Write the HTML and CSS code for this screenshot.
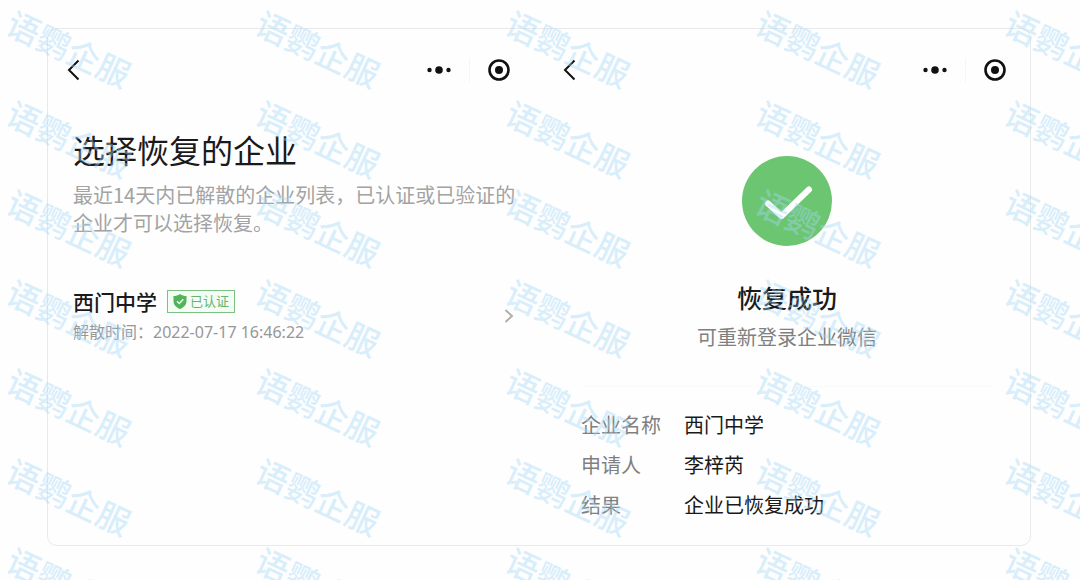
FILE: index.html
```html
<!DOCTYPE html>
<html lang="zh-CN">
<head>
  <meta charset="UTF-8" />
  <meta name="viewport" content="width=device-width, initial-scale=1.0" />
  <title>恢复企业</title>
  <link rel="stylesheet" href="styles.css">
</head>
<body>
  <main class="board">
    <!-- pick a company -->
    <section class="screen">
      <header class="navbar">
        <button class="icon-btn" type="button" aria-label="返回">
          <svg width="14" height="22" viewBox="0 0 14 22" fill="none" stroke="#111" stroke-width="2"><path d="M12.500 1.500 L3 11 L12.500 20.500"/></svg>
        </button>
        <div class="capsule">
          <button class="icon-btn" type="button" aria-label="更多">
            <svg width="24" height="10" viewBox="0 0 24 10" fill="#111"><circle cx="2.500" cy="5" r="2.200"/><circle cx="12" cy="5" r="3.800"/><circle cx="21.500" cy="5" r="2.200"/></svg>
          </button>
          <span class="capsule-line"></span>
          <button class="icon-btn" type="button" aria-label="关闭">
            <svg width="22" height="22" viewBox="0 0 22 22"><circle cx="11" cy="11" r="9.500" fill="none" stroke="#111" stroke-width="2.600"/><circle cx="11" cy="11" r="4" fill="#111"/></svg>
          </button>
        </div>
      </header>

      <div class="picker">
        <h1 class="picker-title">选择恢复的企业</h1>
        <p class="picker-desc">最近14天内已解散的企业列表，已认证或已验证的企业才可以选择恢复。</p>

        <a class="company" href="#result">
          <span class="company-info">
            <span class="company-head">
              <span class="company-name">西门中学</span>
              <span class="badge">
                <svg width="14" height="15" viewBox="0 0 14 15"><path d="M7 0 C9 1.500 11 2 13.500 2 V7 C13.500 11 10.500 13.500 7 15 C3.500 13.500 .5 11 .5 7 V2 C3 2 5 1.500 7 0 Z" fill="#51b35a"/><path d="M4 7.200 L6.300 9.500 L10.300 5.200" fill="none" stroke="#e9fbe9" stroke-width="1.500"/></svg>
                已认证
              </span>
            </span>
            <span class="company-time">解散时间：<span class="digits">2022-07-17 16:46:22</span></span>
          </span>
          <svg class="arrow" width="10" height="14" viewBox="0 0 10 14" fill="none" stroke="#b0b0b0" stroke-width="2"><path d="M1.500 1 L8 7 L1.500 13"/></svg>
        </a>
      </div>
    </section>

    <!-- result -->
    <section class="screen" id="result">
      <header class="navbar">
        <button class="icon-btn" type="button" aria-label="返回">
          <svg width="14" height="22" viewBox="0 0 14 22" fill="none" stroke="#111" stroke-width="2"><path d="M12.500 1.500 L3 11 L12.500 20.500"/></svg>
        </button>
        <div class="capsule">
          <button class="icon-btn" type="button" aria-label="更多">
            <svg width="24" height="10" viewBox="0 0 24 10" fill="#111"><circle cx="2.500" cy="5" r="2.200"/><circle cx="12" cy="5" r="3.800"/><circle cx="21.500" cy="5" r="2.200"/></svg>
          </button>
          <span class="capsule-line"></span>
          <button class="icon-btn" type="button" aria-label="关闭">
            <svg width="22" height="22" viewBox="0 0 22 22"><circle cx="11" cy="11" r="9.500" fill="none" stroke="#111" stroke-width="2.600"/><circle cx="11" cy="11" r="4" fill="#111"/></svg>
          </button>
        </div>
      </header>

      <div class="success">
        <svg width="92" height="92" viewBox="0 0 92 92"><circle cx="46" cy="46" r="45" fill="#6cc570"/><path d="M27 48.500 L40.500 61 L68 34.500" fill="none" stroke="#fff" stroke-width="6" stroke-linecap="round" stroke-linejoin="round"/></svg>
        <h2 class="success-title">恢复成功</h2>
        <p class="success-desc">可重新登录企业微信</p>
      </div>

      <dl class="details">
        <dt>企业名称</dt>
        <dd>西门中学</dd>
        <dt>申请人</dt>
        <dd>李梓芮</dd>
        <dt>结果</dt>
        <dd>企业已恢复成功</dd>
      </dl>
    </section>
  </main>

  <div class="watermark" aria-hidden="true">
    <div class="marks" id="marks"></div>
  </div>

  <script>
    const marks = document.getElementById("marks");
    for (let i = 0; i < 35; i++) {
      const mark = document.createElement("span");
      mark.textContent = "语鹦企服";
      marks.appendChild(mark);
    }
  </script>
</body>
</html>
```
FILE: styles.css
```css
:root {
  --text: #1a1a1a;
  --muted: #a3a3a3;
  --label: #808080;
  --line: #e9e9e9;
}

* {
  box-sizing: border-box;
}

body {
  position: relative;
  margin: 0;
  min-height: 100vh;
  padding: 28px 49px 34px 47px;
  display: flex;
  background: #fefefe;
  color: var(--text);
  font-family: "Noto Sans CJK SC", sans-serif;
}

h1, h2, p, dl, dd {
  margin: 0;
}

.board {
  flex: 1;
  display: grid;
  grid-template-columns: 496fr 486fr;
  border: 1px solid var(--line);
  border-radius: 10px;
}

.navbar {
  display: flex;
  justify-content: space-between;
  align-items: center;
  height: 44px;
  margin-top: 19px;
  padding: 0 24px 0 18px;
}

.screen:first-child .navbar {
  padding-right: 34px;
}

.icon-btn {
  display: flex;
  padding: 0;
  border: none;
  background: none;
  cursor: pointer;
}

.capsule {
  display: flex;
  align-items: center;
  gap: 18px;
}

.capsule-line {
  width: 1px;
  height: 24px;
  background: #f5f5f5;
}

.picker {
  padding: 33px 26px 0 25px;
}

.picker-title {
  font-size: 32px;
  font-weight: 400;
  line-height: 48px;
}

.picker-desc {
  margin-top: 8px;
  font-size: 20px;
  line-height: 28px;
  color: var(--muted);
}

.company {
  display: flex;
  align-items: center;
  justify-content: space-between;
  margin-top: 48px;
  padding-right: 4px;
  color: inherit;
  text-decoration: none;
}

.company-info {
  display: flex;
  flex-direction: column;
}

.company-head {
  display: flex;
  align-items: center;
  gap: 10px;
  line-height: 32px;
}

.company-name {
  font-size: 21px;
  font-weight: 500;
}

.badge {
  display: flex;
  align-items: center;
  gap: 3px;
  height: 23px;
  padding: 0 5px;
  border: 1px solid #7cc283;
  background: #f3fdf3;
  color: #68b46e;
  font-size: 13px;
}

.company-time {
  font-size: 16px;
  line-height: 28px;
  color: #979797;
}

.digits {
  font-family: "Noto Sans", sans-serif;
}

.success {
  display: flex;
  flex-direction: column;
  align-items: center;
  padding-top: 63px;
}

.success-title {
  margin-top: 32px;
  font-size: 25px;
  font-weight: 500;
  line-height: 36px;
}

.success-desc {
  margin-top: 8px;
  font-size: 20px;
  line-height: 28px;
  color: var(--label);
}

.details {
  display: grid;
  grid-template-columns: 80px 1fr;
  column-gap: 23px;
  margin: 35px 37px 0;
  padding-top: 18px;
  border-top: 1px solid #fafafa;
  font-size: 20px;
  line-height: 40px;
}

.details dt {
  color: var(--label);
}

/* tiled marks over the whole page */
.watermark {
  position: absolute;
  inset: 0;
  overflow: hidden;
  pointer-events: none;
}

.marks {
  width: 1248px;
  height: 108%;
  margin: 4px 0 0 -56px;
  display: grid;
  grid-template-columns: repeat(5, 1fr);
  grid-template-rows: repeat(7, 1fr);
  place-items: center;
  color: rgba(165, 216, 248, 0.42);
  font-size: 33px;
  font-weight: 500;
  line-height: 1;
}

.marks span {
  transform: rotate(25deg);
}
```
